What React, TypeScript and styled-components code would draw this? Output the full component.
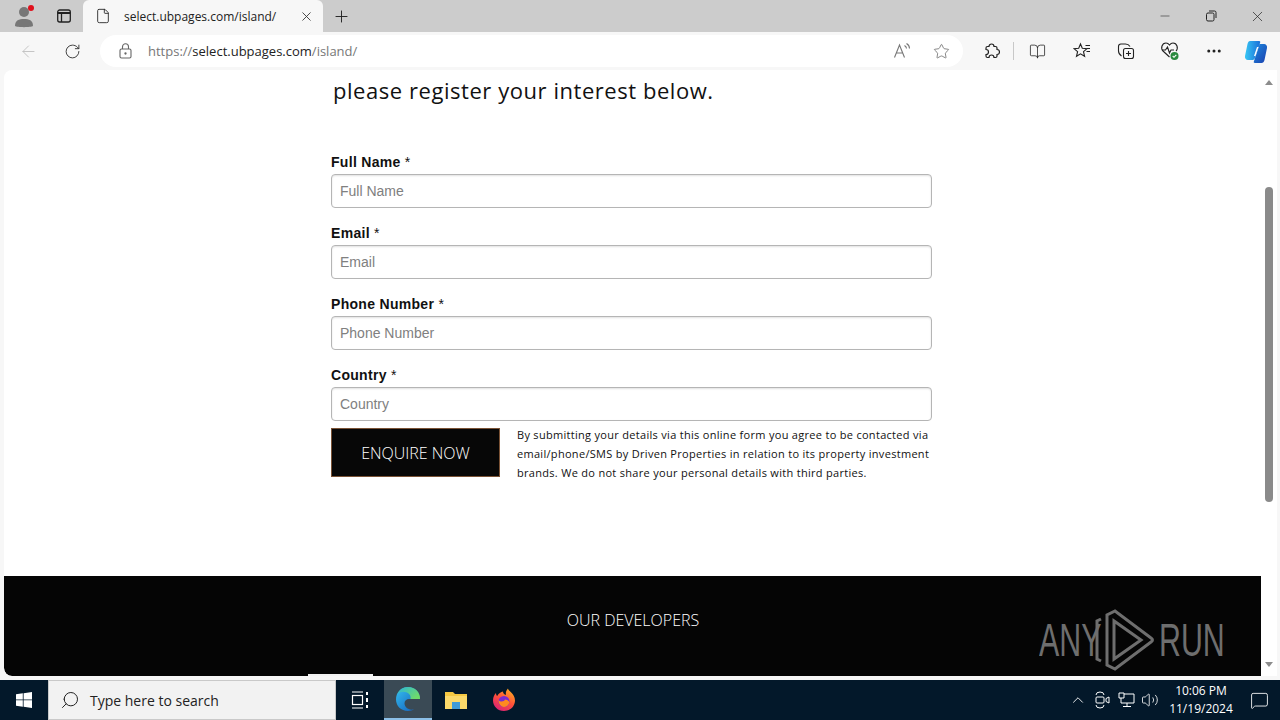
import React from 'react';
import styled, {createGlobalStyle} from 'styled-components';
import {
    ArrowLeft, BookOpen, ChevronUp, Ellipsis, File, Minus, MessageSquare, Plus, RotateCw, Search, Star, Volume2, X
} from 'lucide-react';

const GlobalStyle = createGlobalStyle`
  html, body {
    margin: 0;
    padding: 0;
    width: 1280px;
    height: 720px;
    overflow: hidden;
    font-family: "Open Sans", "Liberation Sans", sans-serif;
    background: #f7f7f7;
  }
  * {
    box-sizing: border-box;
  }
`

const Desktop = styled.div`
  width: 1280px;
  height: 720px;
  display: flex;
  flex-direction: column;
  position: relative;
`

const TabStrip = styled.div`
  height: 32px;
  background: #cccccc;
  display: flex;
  align-items: flex-end;
  flex-shrink: 0;
`

const ProfileButton = styled.div`
  width: 40px;
  height: 32px;
  margin-left: 4px;
  position: relative;
  display: flex;
  align-items: center;
  justify-content: center;
`

const RedDot = styled.span`
  position: absolute;
  top: 5px;
  left: 24px;
  width: 6px;
  height: 6px;
  border-radius: 50%;
  background: #e0101c;
`

const StripIcon = styled.div`
  width: 39px;
  height: 32px;
  display: flex;
  align-items: center;
  justify-content: center;
`

const Tab = styled.div`
  width: 240px;
  height: 32px;
  background: #f7f7f7;
  border-radius: 6px 6px 0 0;
  display: flex;
  align-items: center;
  padding: 0 9px 0 12px;
  color: #222;
  font-size: 12px;
`

const TabTitle = styled.span`
  flex: 1;
  margin-left: 13px;
  font-family: "Open Sans", sans-serif;
`

const NewTab = styled.div`
  width: 36px;
  height: 32px;
  display: flex;
  align-items: center;
  justify-content: center;
`

const WindowControls = styled.div`
  margin-left: auto;
  display: flex;
  height: 32px;
`

const WindowButton = styled.div`
  width: 46px;
  height: 32px;
  display: flex;
  align-items: center;
  justify-content: center;
`

const Toolbar = styled.div`
  height: 38px;
  background: #f7f7f7;
  display: flex;
  align-items: center;
  flex-shrink: 0;
`

const NavButton = styled.div<{ $width: number }>`
  width: ${props => props.$width}px;
  height: 32px;
  display: flex;
  align-items: center;
  justify-content: center;
  flex-shrink: 0;
`

const AddressBar = styled.div`
  width: 863px;
  height: 32px;
  margin-left: 6px;
  margin-right: 6px;
  background: #ffffff;
  border-radius: 16px;
  display: flex;
  align-items: center;
  padding: 0 13px 0 18px;
  flex-shrink: 0;
`

const Url = styled.div`
  flex: 1;
  margin-left: 15px;
  font-size: 13px;
  color: #777;
`

const UrlHost = styled.span`
  color: #222;
`

const Divider = styled.div`
  width: 1px;
  height: 18px;
  background: #c8c8c8;
  flex-shrink: 0;
`

const Main = styled.div`
  flex: 1;
  display: flex;
  min-height: 0;
  padding: 0 3px 4px 4px;
  position: relative;
`

const PageView = styled.div`
  flex: 1;
  background: #ffffff;
  border-radius: 8px 0 0 8px;
  overflow: hidden;
  display: flex;
  flex-direction: column;
`

const FormArea = styled.div`
  height: 506px;
  padding-left: 327px;
  flex-shrink: 0;
`

const Heading = styled.h2`
  margin: 0 0 38px 2px;
  height: 40px;
  padding-top: 3px;
  font-family: "Open Sans", sans-serif;
  font-weight: 500;
  font-size: 22px;
  line-height: 34px;
  letter-spacing: 0.55px;
  color: #111;
`

const Field = styled.div`
  width: 601px;
  height: 71px;
  padding-top: 7px;
`

const Label = styled.label`
  display: block;
  height: 15px;
  margin-bottom: 4px;
  font-family: "Liberation Sans", Arial, sans-serif;
  font-size: 14px;
  line-height: 15px;
  font-weight: 700;
  letter-spacing: 0.3px;
  color: #111;
`

const Required = styled.span`
  font-weight: 400;
`

const Input = styled.input`
  display: block;
  width: 601px;
  height: 34px;
  padding: 0 8px;
  border: 1px solid #b5b5b5;
  border-radius: 4px;
  box-shadow: inset 0 1px 2px rgba(0, 0, 0, 0.12);
  background: #fff;
  font-family: "Liberation Sans", Arial, sans-serif;
  font-size: 14px;
  outline: none;

  &::placeholder {
    color: #808080;
    opacity: 1;
  }
`

const SubmitRow = styled.div`
  display: flex;
  width: 601px;
  margin-top: -4px;
  gap: 17px;
`

const SubmitButton = styled.button`
  width: 169px;
  height: 49px;
  background: #070707;
  border: 1px solid #7a5235;
  color: #ffffff;
  font-family: "Open Sans", sans-serif;
  font-weight: 300;
  font-size: 16px;
  padding: 0;
  flex-shrink: 0;
`

const Disclaimer = styled.p`
  margin: -3px 0 0;
  font-family: "Open Sans", sans-serif;
  font-size: 11px;
  line-height: 19px;
  letter-spacing: 0.3px;
  color: #111;
  white-space: nowrap;
`

const Footer = styled.div`
  height: 100px;
  background: #050505;
  border-radius: 0 0 0 8px;
  color: #fff;
  text-align: center;
  padding-top: 31px;
  padding-left: 1px;
  font-weight: 300;
  font-size: 16px;
  line-height: 26px;
`

const Sliver = styled.div`
  position: absolute;
  left: 308px;
  bottom: 4px;
  width: 65px;
  height: 2px;
  background: #f2f2f2;
`

const Scrollbar = styled.div`
  width: 16px;
  background: #ffffff;
  display: flex;
  flex-direction: column;
  align-items: center;
  padding-top: 10px;
  position: relative;
`

const Arrow = styled.div<{ $down?: boolean }>`
  width: 0;
  height: 0;
  border-left: 4px solid transparent;
  border-right: 4px solid transparent;
  ${props => props.$down
    ? 'border-top: 5px solid #8c8c8c; margin-top: auto; margin-bottom: 9px;'
    : 'border-bottom: 5px solid #8c8c8c;'}
`

const Thumb = styled.div`
  width: 8px;
  height: 315px;
  margin-top: 102px;
  background: #8a8a8a;
  border-radius: 4px;
`

const Watermark = styled.div`
  position: absolute;
  left: 1039px;
  top: 538px;
  display: flex;
  align-items: center;
  width: 192px;
  height: 64px;
  color: #6e6e6e;
  font-family: "Liberation Sans", Arial, sans-serif;
  font-size: 46px;
  line-height: 64px;
`

const LogoWord = styled.span<{ $origin: string }>`
  display: inline-block;
  transform: scaleX(0.66);
  transform-origin: ${props => props.$origin} center;
  width: 54px;
  white-space: nowrap;
`

const Taskbar = styled.div`
  height: 40px;
  background: #03182a;
  display: flex;
  align-items: center;
  flex-shrink: 0;
  color: #fff;
`

const StartButton = styled.div`
  width: 48px;
  height: 40px;
  display: flex;
  align-items: center;
  justify-content: center;
`

const SearchBox = styled.div`
  width: 288px;
  height: 40px;
  background: #f2f2f2;
  border: 1px solid #c9c9c9;
  border-bottom-width: 1px;
  display: flex;
  align-items: center;
  padding-left: 11px;
  color: #222;
  font-size: 14px;
`

const SearchText = styled.span`
  margin-left: 10px;
  font-family: "Open Sans", sans-serif;
`

const TaskIcon = styled.div<{ $active?: boolean }>`
  width: 48px;
  height: 40px;
  display: flex;
  align-items: center;
  justify-content: center;
  background: ${props => props.$active ? '#3a4a55' : 'transparent'};
  border-bottom: ${props => props.$active ? '2px solid #8cc0e8' : 'none'};
`

const Tray = styled.div`
  margin-left: auto;
  display: flex;
  align-items: center;
  height: 40px;
`

const TrayIcon = styled.div`
  width: 24px;
  height: 40px;
  display: flex;
  align-items: center;
  justify-content: center;
`

const Clock = styled.div`
  width: 74px;
  text-align: center;
  font-size: 12px;
  line-height: 18px;
  font-family: "Open Sans", sans-serif;
  margin-left: 2px;
`

const Notify = styled.div`
  width: 42px;
  height: 40px;
  display: flex;
  align-items: center;
  justify-content: center;
`

const FIELDS = ['Full Name', 'Email', 'Phone Number', 'Country'];

const EdgeLogo = () => (
    <svg width="26" height="26" viewBox="0 0 26 26">
        <defs>
            <linearGradient id="edgeA" x1="0" y1="0" x2="1" y2="1">
                <stop offset="0" stopColor="#35c1f1"/>
                <stop offset="1" stopColor="#1259b8"/>
            </linearGradient>
            <linearGradient id="edgeB" x1="0" y1="0" x2="1" y2="0.6">
                <stop offset="0" stopColor="#2bb5d8"/>
                <stop offset="1" stopColor="#6fdc6a"/>
            </linearGradient>
        </defs>
        <path d="M13 1C6 1 1 6.500 1 13.500c0 6.500 5 11.500 12 11.500 2.500 0 4.500-.6 6-1.700-5 1.500-9.500-1.800-9.500-6 0-2.500 2-4.300 4.500-4.300h11C25 6 20 1 13 1z" fill="url(#edgeA)"/>
        <path d="M13 1C8 1 4 4 2.500 8 5 5.500 9 5 12 6.500c3 1.500 4 3.800 3.500 6.500H25C25.500 6.500 20 1 13 1z" fill="url(#edgeB)"/>
    </svg>
);

const FirefoxLogo = () => (
    <svg width="24" height="24" viewBox="0 0 24 24">
        <defs>
            <linearGradient id="foxA" x1="0.8" y1="0" x2="0.2" y2="1">
                <stop offset="0" stopColor="#ffb01f"/>
                <stop offset="0.5" stopColor="#ff4f3a"/>
                <stop offset="1" stopColor="#d81f7a"/>
            </linearGradient>
        </defs>
        <path d="M12 23C5.500 23 1 18 1 12.500 1 9 2.500 6.500 4 5c0 1.500.5 2.500 1.200 3C6.500 5.500 9 4 11 3.500c0 2 1.200 3 3 3.500-.5-2 0-4.500 2-6.500 0 2.500 7 5 7 12C23 18 18.500 23 12 23z" fill="url(#foxA)"/>
        <circle cx="12" cy="13.500" r="5.500" fill="#7a2bd0"/>
        <path d="M6.500 12c2 2.500 6 1.500 6.500-.5 1.500 0 4 1 4.500 3-1 3-3.500 4.500-5.500 4.500-3 0-5.500-3-5.500-7z" fill="#ff8a1f"/>
    </svg>
);

const CopilotLogo = () => (
    <svg width="26" height="26" viewBox="0 0 26 26">
        <defs>
            <linearGradient id="copA" x1="0" y1="0" x2="1" y2="0">
                <stop offset="0" stopColor="#38c6f4"/>
                <stop offset="1" stopColor="#1a6fd8"/>
            </linearGradient>
            <linearGradient id="copB" x1="0" y1="0" x2="1" y2="1">
                <stop offset="0" stopColor="#1d8be0"/>
                <stop offset="1" stopColor="#1b3fae"/>
            </linearGradient>
        </defs>
        <path d="M7 3h9c1.500 0 1.500 1 1 2L12 20c-.6 1.500-1.500 2-3 2H5c-2 0-3.500-2-3-4L4.500 6C5 4 5.800 3 7 3z" fill="url(#copA)"/>
        <path d="M16 6h5c2 0 3.500 2 3 4l-2.500 12c-.5 2-1.500 3-3 3H12c-1.500 0-1.500-1-1-2L16 8c.3-1 .5-2 0-2z" fill="url(#copB)"/>
        <path d="M14 9l-3 9h1.500l3-9z" fill="#ffffff"/>
    </svg>
);

const AnyRunMark = () => (
    <svg width="62" height="62" viewBox="0 0 62 62" fill="none" stroke="#6e6e6e" strokeWidth="3" style={{flexShrink: 0}}>
        <path d="M8 10 4 12v38l4 2"/>
        <path d="M14 6v50l8 4 36-27q3-2 0-4L22 2z" />
        <path d="M21 12v38l27-19z"/>
    </svg>
);

const WindowsLogo = () => (
    <svg width="16" height="16" viewBox="0 0 16 16" fill="#ffffff">
        <path d="M0 2.300 6.800 1.300V7.500H0zM7.600 1.200 16 0V7.500H7.600zM0 8.300H6.800V14.700L0 13.700zM7.600 8.300H16V16L7.600 14.800z"/>
    </svg>
);

const FolderIcon = () => (
    <svg width="24" height="22" viewBox="0 0 24 22">
        <path d="M1 3h8l2 2h12v15H1z" fill="#f5c842"/>
        <path d="M1 7h22v13H1z" fill="#fbd96a"/>
        <path d="M8 13h8v7H8z" fill="#3f9bd8"/>
    </svg>
);

const App = () => {
    const grey = '#444';
    return (
        <Desktop>
            <GlobalStyle/>
            <TabStrip>
                <ProfileButton>
                    <svg width="22" height="24" viewBox="0 0 22 24" fill="#777">
                        <circle cx="11" cy="8" r="5"/>
                        <path d="M2 22c0-6 4-7 9-7s9 1 9 7c-2 1.500-16 1.500-18 0z"/>
                    </svg>
                    <RedDot/>
                </ProfileButton>
                <StripIcon>
                    <svg width="16" height="16" viewBox="0 0 16 16" fill="none" stroke="#222" strokeWidth="1.300">
                        <rect x="1.700" y="2" width="12.600" height="12" rx="2"/>
                        <path d="M1.700 5h12.600" strokeWidth="2"/>
                        <path d="M5.500 5v9"/>
                    </svg>
                </StripIcon>
                <Tab>
                    <File size={16} strokeWidth={1.3} color="#222"/>
                    <TabTitle>select.ubpages.com/island/</TabTitle>
                    <X size={15} strokeWidth={1.4} color="#333"/>
                </Tab>
                <NewTab>
                    <Plus size={19} strokeWidth={1.2} color="#222"/>
                </NewTab>
                <WindowControls>
                    <WindowButton><Minus size={14} strokeWidth={1} color="#222"/></WindowButton>
                    <WindowButton>
                        <svg width="12" height="12" viewBox="0 0 12 12" fill="none" stroke="#222">
                            <rect x="1.500" y="3" width="7.500" height="8" rx="1.500"/>
                            <path d="M4 1h5.500q1.500 0 1.500 1.500V8"/>
                        </svg>
                    </WindowButton>
                    <WindowButton><X size={17} strokeWidth={1} color="#222"/></WindowButton>
                </WindowControls>
            </TabStrip>
            <Toolbar>
                <NavButton $width={44} style={{marginLeft: 6}}><ArrowLeft size={19} strokeWidth={1.1} color="#bdbdbd"/></NavButton>
                <NavButton $width={44}><RotateCw size={17} strokeWidth={1.3} color="#333"/></NavButton>
                <AddressBar>
                    <svg width="15" height="16" viewBox="0 0 15 16" fill="none" stroke="#666" strokeWidth="1.100">
                        <rect x="2" y="6" width="11" height="9" rx="1.500"/>
                        <path d="M4.500 6V3.800a3 3 0 0 1 6 0V6"/>
                        <circle cx="7.500" cy="10.500" r="0.600" fill="#666"/>
                    </svg>
                    <Url>https://<UrlHost>select.ubpages.com</UrlHost>/island/</Url>
                    <svg width="18" height="18" viewBox="0 0 18 18" fill="none" stroke="#777" strokeWidth="1.100" style={{marginRight: 22}}>
                        <path d="M1.500 15.500 6.500 3l5 12.500M3.300 11h6.400"/>
                        <path d="M11.500 3.500q2 1.200 2 3M13.500 1.500q3 1.800 3 5"/>
                    </svg>
                    <Star size={17} strokeWidth={1.1} color="#666"/>
                </AddressBar>
                <NavButton $width={44} style={{marginLeft: 0}}>
                    <svg width="17" height="17" viewBox="0 0 17 17" fill="none" stroke="#222" strokeWidth="1.200">
                        <path d="M6 3.500a2.500 2.500 0 0 1 5 0h1.500q1.500 0 1.500 1.500v1.500a2.500 2.500 0 0 1 0 5V13q0 1.500-1.500 1.500H11a2.500 2.500 0 0 0-5 0H4.500Q3 14.500 3 13v-1.500a2.500 2.500 0 0 0 0-5V5q0-1.500 1.500-1.500z"/>
                    </svg>
                </NavButton>
                <Divider/>
                <NavButton $width={47}>
                    <BookOpen size={17} strokeWidth={1.1} color="#222"/>
                </NavButton>
                <NavButton $width={42}>
                    <svg width="18" height="18" viewBox="0 0 18 18" fill="none" stroke="#222" strokeWidth="1.100">
                        <path d="M7.500 2 9.300 6.300 14 6.700l-3.500 3 1.100 4.600-4.100-2.500-4 2.500 1.100-4.600L1 6.700l4.700-.4z"/>
                        <path d="M12.500 3.500H17M14 6.500h3M13.500 9.500H17"/>
                    </svg>
                </NavButton>
                <NavButton $width={46}>
                    <svg width="18" height="18" viewBox="0 0 18 18" fill="none" stroke="#222" strokeWidth="1.100">
                        <rect x="6.500" y="6.500" width="10" height="10" rx="2"/>
                        <path d="M11.500 9v5M9 11.500h5"/>
                        <path d="M4.500 14Q1.500 12 1.500 9V4.500Q1.500 2 4 2h4.500q3 0 4.500 2.500"/>
                    </svg>
                </NavButton>
                <NavButton $width={42} style={{position: 'relative'}}>
                    <svg width="20" height="20" viewBox="0 0 20 20" fill="none" stroke="#222" strokeWidth="1.100">
                        <path d="M9.500 16 3 10Q1 8 2 5t4-3q2 0 3.500 2Q11 2 13 2q3 0 4 3t-1 5"/>
                        <path d="M2 9h3.500l2-3 2 6 1.500-3h3"/>
                        <circle cx="14.500" cy="15" r="4" fill="#2a8a3e" stroke="none"/>
                        <path d="M12.700 15l1.300 1.300 2.300-2.500" stroke="#fff"/>
                    </svg>
                </NavButton>
                <NavButton $width={46}><Ellipsis size={18} strokeWidth={2} color="#222"/></NavButton>
                <NavButton $width={38}><CopilotLogo/></NavButton>
            </Toolbar>
            <Main>
                <PageView>
                    <FormArea>
                        <Heading>please register your interest below.</Heading>
                        {FIELDS.map(field => (
                            <Field key={field}>
                                <Label>{field} <Required>*</Required></Label>
                                <Input placeholder={field} readOnly/>
                            </Field>
                        ))}
                        <SubmitRow>
                            <SubmitButton>ENQUIRE NOW</SubmitButton>
                            <Disclaimer>
                                By submitting your details via this online form you agree to be contacted via<br/>
                                email/phone/SMS by Driven Properties in relation to its property investment<br/>
                                brands. We do not share your personal details with third parties.
                            </Disclaimer>
                        </SubmitRow>
                    </FormArea>
                    <Footer>OUR DEVELOPERS</Footer>
                </PageView>
                <Scrollbar>
                    <Arrow/>
                    <Thumb/>
                    <Arrow $down/>
                </Scrollbar>
                <Sliver/>
                <Watermark>
                    <LogoWord $origin="left">ANY</LogoWord>
                    <AnyRunMark/>
                    <LogoWord $origin="left" style={{marginLeft: 4}}>RUN</LogoWord>
                </Watermark>
            </Main>
            <Taskbar>
                <StartButton><WindowsLogo/></StartButton>
                <SearchBox>
                    <Search size={20} strokeWidth={1.2} color="#222" style={{transform: 'scaleX(-1)'}}/>
                    <SearchText>Type here to search</SearchText>
                </SearchBox>
                <TaskIcon>
                    <svg width="18" height="18" viewBox="0 0 18 18" fill="none" stroke="#fff" strokeWidth="1.200">
                        <path d="M1 1h11M1 17h11"/>
                        <rect x="1.500" y="4.500" width="10" height="9"/>
                        <path d="M16 1v3M16 7v4M16 14v3" strokeWidth="2"/>
                    </svg>
                </TaskIcon>
                <TaskIcon $active><EdgeLogo/></TaskIcon>
                <TaskIcon><FolderIcon/></TaskIcon>
                <TaskIcon><FirefoxLogo/></TaskIcon>
                <Tray>
                    <TrayIcon><ChevronUp size={18} strokeWidth={1.2} color="#fff"/></TrayIcon>
                    <TrayIcon>
                        <svg width="16" height="18" viewBox="0 0 16 18" fill="none" stroke="#fff">
                            <path d="M2 4q0-3 4-3t4 3M2 14q0 3 4 3t4-3"/>
                            <rect x="2" y="6" width="8" height="6" rx="1"/>
                            <path d="M12 7.500l3-1.500v6l-3-1.500z"/>
                        </svg>
                    </TrayIcon>
                    <TrayIcon>
                        <svg width="17" height="16" viewBox="0 0 17 16" fill="none" stroke="#fff">
                            <path d="M6 2H16V11H5M1 1h5v5H1zM3 6v5h2M9 11v3M5 14.500h8"/>
                        </svg>
                    </TrayIcon>
                    <TrayIcon><Volume2 size={18} strokeWidth={1.1} color="#fff"/></TrayIcon>
                    <Clock>10:06 PM<br/>11/19/2024</Clock>
                    <Notify><MessageSquare size={19} strokeWidth={1.1} color={grey === '#444' ? '#fff' : grey}/></Notify>
                </Tray>
            </Taskbar>
        </Desktop>
    );
};

export default App;
